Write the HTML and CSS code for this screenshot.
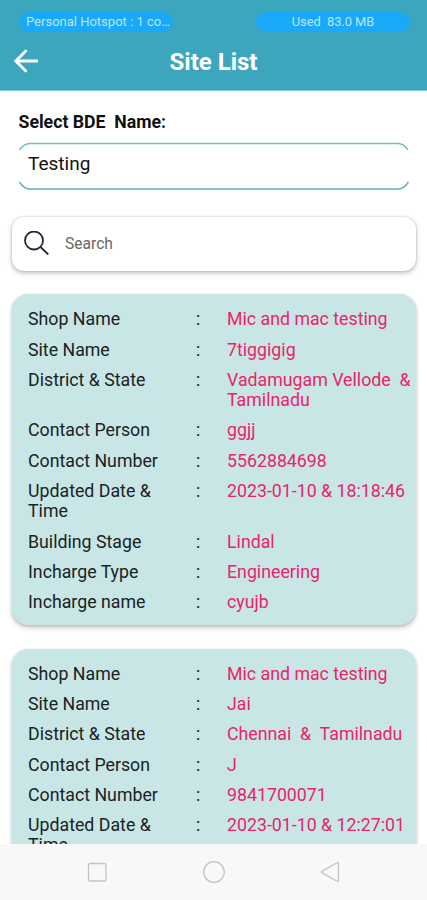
FILE: index.html
```html
<!DOCTYPE html>
<html lang="en">
<head>
<meta charset="utf-8">
<title>Site List</title>
<link rel="stylesheet" href="styles.css">
</head>
<body>
<div class="screen">
  <header class="header">
    <div class="status">
      <span class="pill pill-left">Personal Hotspot : 1 co…</span>
      <span class="pill pill-right">Used&nbsp; 83.0 MB</span>
    </div>
    <div class="bar">
      <svg class="back" viewBox="0 0 26 26" fill="none" stroke="#fff" stroke-width="2.8"><path d="M25 12H3M13.500 1.300L2.800 12L13.500 22.700"/></svg>
      <h1 class="title">Site List</h1>
    </div>
  </header>
  <main class="content">
    <label class="label">Select BDE&nbsp; Name:</label>
    <div class="field">
      <svg class="outline" viewBox="0 0 392 48" fill="none" stroke-width="1.4"><path stroke="#77bdbb" d="M1.500 8Q6 1.500 12 1.500H380Q386 1.500 390 8"/><path stroke="#68adbb" d="M1.500 40Q6 47 12 47H380Q386 47 390.500 40"/></svg>
      <span>Testing</span>
    </div>
    <div class="search">
      <svg class="glass" viewBox="0 0 26 26" fill="none" stroke="#25283f" stroke-width="1.8"><circle cx="10" cy="9.500" r="9"/><path d="M16.500 16L24.300 23.500"/></svg>
      <span>Search</span>
    </div>
    <section class="card">
      <div class="row"><span>Shop Name</span><i>:</i><b>Mic and mac testing</b></div>
      <div class="row"><span>Site Name</span><i>:</i><b>7tiggigig</b></div>
      <div class="row"><span>District &amp; State</span><i>:</i><b>Vadamugam Vellode&nbsp; &amp;<br>Tamilnadu</b></div>
      <div class="row"><span>Contact Person</span><i>:</i><b>ggjj</b></div>
      <div class="row"><span>Contact Number</span><i>:</i><b>5562884698</b></div>
      <div class="row"><span>Updated Date &amp;<br>Time</span><i>:</i><b>2023-01-10 &amp; 18:18:46</b></div>
      <div class="row"><span>Building Stage</span><i>:</i><b>Lindal</b></div>
      <div class="row"><span>Incharge Type</span><i>:</i><b>Engineering</b></div>
      <div class="row"><span>Incharge name</span><i>:</i><b>cyujb</b></div>
    </section>
    <section class="card">
      <div class="row"><span>Shop Name</span><i>:</i><b>Mic and mac testing</b></div>
      <div class="row"><span>Site Name</span><i>:</i><b>Jai</b></div>
      <div class="row"><span>District &amp; State</span><i>:</i><b>Chennai&nbsp; &amp;&nbsp; Tamilnadu</b></div>
      <div class="row"><span>Contact Person</span><i>:</i><b>J</b></div>
      <div class="row"><span>Contact Number</span><i>:</i><b>9841700071</b></div>
      <div class="row"><span>Updated Date &amp;<br>Time</span><i>:</i><b>2023-01-10 &amp; 12:27:01</b></div>
    </section>
  </main>
  <nav class="nav">
    <svg viewBox="0 0 24 24"><rect x="3.500" y="3.500" width="17.500" height="17.500" rx="2"/></svg>
    <svg viewBox="0 0 24 24"><circle cx="12" cy="12" r="10.300"/></svg>
    <svg viewBox="0 0 24 24"><path d="M20.500 3.500V20.500Q20.500 22 19 21.200L3.700 12.600Q2.700 12 3.700 11.400L19 2.800Q20.500 2 20.500 3.500Z"/></svg>
  </nav>
</div>
</body>
</html>
```
FILE: styles.css
```css
* { box-sizing: border-box; }
body { margin: 0; font-family: Roboto, "Liberation Sans", sans-serif; background: #fff; }
svg { display: block; }
.screen { width: 427px; height: 900px; display: flex; flex-direction: column; overflow: hidden; }

.header { flex: none; height: 91px; background: #3ca7bc; border-bottom: 1px solid #7fc5d2; }
.status { display: flex; justify-content: space-between; padding: 12px 17px 0 19px; }
.pill { width: 154px; height: 20px; border-radius: 10px; background: #1aa9f6; color: #b9e7fb; font-size: 12.8px; line-height: 20px; text-align: center; white-space: nowrap; }
.pill-left { padding-left: 7px; font-size: 13px; text-align: left; }
.bar { display: grid; grid-template-columns: 26px 1fr 26px; align-items: center; padding: 0 13px; margin-top: 16px; height: 28px; }
.back { width: 26px; height: 26px; }
.title { margin: 0; font-size: 24px; line-height: 28px; font-weight: 700; color: #fff; text-align: center; }

.content { flex: 1; min-height: 0; overflow: hidden; padding: 21px 11px 0; }
.label { display: block; margin-left: 7.5px; font-size: 17.7px; line-height: 21px; font-weight: 700; color: #111; }
.field { position: relative; margin: 9px 7px 0; height: 48px; padding: 11px 10px 0; font-size: 19px; line-height: 22px; color: #111; }
.outline { position: absolute; left: 0; top: 0; width: 392px; height: 48px; }
.search { display: flex; align-items: center; height: 54px; margin: 27px 0 0 1px; padding-left: 12px; border-radius: 12px; background: #fff; font-size: 15.6px; color: #666; box-shadow: 0 0 2px rgba(0,0,0,.22), 0 2px 5px rgba(0,0,0,.25); }
.glass { width: 26px; height: 26px; margin-right: 15px; }

.card { margin: 23px 0 0 1px; height: 331px; padding: 15.3px 0 0 16px; border-radius: 16px; background: #c9e6e7; box-shadow: 0 1px 3px rgba(70,30,40,.2), 0 3px 5px rgba(70,30,40,.2); font-size: 17.75px; line-height: 20.4px; color: #1b2223; }
.card + .card { margin-top: 24px; padding-top: 14.8px; }
.row { display: grid; grid-template-columns: 168px 31px 1fr; margin-bottom: 9.85px; white-space: nowrap; }
.row i { font-style: normal; }
.row b { font-weight: 400; color: #e8246a; }

.nav { flex: none; height: 56px; display: flex; justify-content: center; align-items: center; gap: 92.5px; background: #f8f8f8; }
.nav svg { width: 24px; height: 24px; fill: none; stroke: #c4c4c4; stroke-width: 1.3; }
```
